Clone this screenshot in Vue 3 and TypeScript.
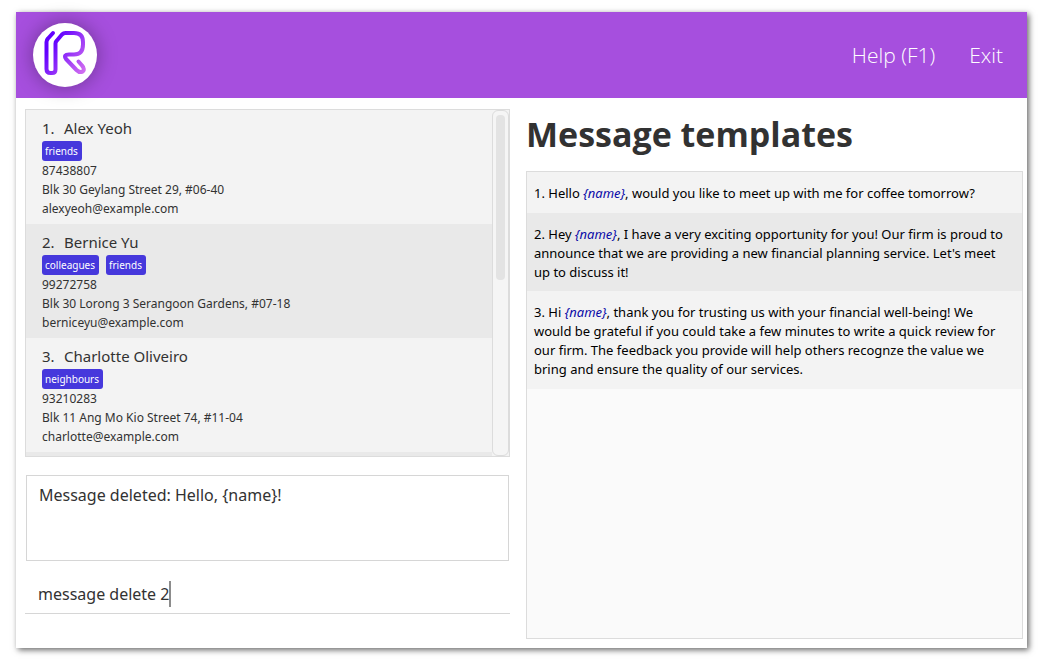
<script setup lang="ts">
import { ref } from 'vue'

interface Person {
  name: string
  tags: string[]
  phone: string
  address: string
  email: string
}

interface Template {
  before: string
  after: string
}

const people: Person[] = [
  { name: 'Alex Yeoh', tags: ['friends'], phone: '87438807', address: 'Blk 30 Geylang Street 29, #06-40', email: 'alexyeoh@example.com' },
  { name: 'Bernice Yu', tags: ['colleagues', 'friends'], phone: '99272758', address: 'Blk 30 Lorong 3 Serangoon Gardens, #07-18', email: 'berniceyu@example.com' },
  { name: 'Charlotte Oliveiro', tags: ['neighbours'], phone: '93210283', address: 'Blk 11 Ang Mo Kio Street 74, #11-04', email: 'charlotte@example.com' },
]

const templates: Template[] = [
  { before: 'Hello ', after: ', would you like to meet up with me for coffee tomorrow?' },
  { before: 'Hey ', after: ", I have a very exciting opportunity for you! Our firm is proud to announce that we are providing a new financial planning service. Let's meet up to discuss it!" },
  { before: 'Hi ', after: ', thank you for trusting us with your financial well-being! We would be grateful if you could take a few minutes to write a quick review for our firm. The feedback you provide will help others recognze the value we bring and ensure the quality of our services.' },
]

const placeholder = '{name}'
const result = 'Message deleted: Hello, {name}!'
const command = ref('message delete 2')
</script>

<template>
  <div class="desktop">
    <div class="window">
      <header class="bar">
        <div class="logo">
          <svg viewBox="0 0 64 64" aria-hidden="true">
            <defs>
              <linearGradient id="ink" gradientUnits="userSpaceOnUse" x1="14" y1="20" x2="52" y2="46">
                <stop offset="0.1" stop-color="#6200ff" />
                <stop offset="1" stop-color="#cf6cf0" />
              </linearGradient>
            </defs>
            <path
              d="M20 10 L15 15.500 Q13.500 17 13.500 19 V46 Q13.500 50 17.500 50 H19 Q22.500 50 22.500 46.500 V20.500 Q22.500 19 23.500 18 L29 11.500 Q30.500 10 32.500 10 H41 Q50 10 50 19 V21.500 Q50 31.500 41 31.500 H36 Q30 31.500 33 36 L43.500 47 Q46 49.500 48.500 49 C52 48 51 44.500 49 42.500 L45.500 38.500"
              fill="none" stroke="url(#ink)" stroke-width="4" stroke-linecap="round" stroke-linejoin="round"
            />
          </svg>
        </div>
        <nav class="menu">
          <button type="button">Help (F1)</button>
          <button type="button">Exit</button>
        </nav>
      </header>

      <main class="content">
        <section class="left">
          <div class="people">
            <ol class="cards">
              <li v-for="(person, i) in people" :key="person.email" class="card">
                <h2><span class="index">{{ i + 1 }}.</span>{{ person.name }}</h2>
                <div class="tags">
                  <span v-for="tag in person.tags" :key="tag" class="tag">{{ tag }}</span>
                </div>
                <p>{{ person.phone }}</p>
                <p>{{ person.address }}</p>
                <p>{{ person.email }}</p>
              </li>
              <li class="card"></li>
            </ol>
            <div class="track"><div class="thumb"></div></div>
          </div>
          <div class="result" role="status">{{ result }}</div>
          <label class="command">
            <input v-model="command" type="text" aria-label="Command" spellcheck="false" />
            <span class="caret"></span>
          </label>
        </section>

        <section class="right">
          <h1>Message templates</h1>
          <ol class="templates">
            <li v-for="(item, i) in templates" :key="i">
              {{ i + 1 }}. {{ item.before }}<em>{{ placeholder }}</em>{{ item.after }}
            </li>
          </ol>
        </section>
      </main>
    </div>
  </div>
</template>

<style>
body {
  background: #fff;
}
</style>

<style scoped>
* {
  box-sizing: border-box;
  margin: 0;
  padding: 0;
}

.desktop {
  display: flex;
  height: 100vh;
  padding: 12px 24px 24px 16px;
  font-family: "Noto Sans", "Open Sans", sans-serif;
  color: #323232;
}

.window {
  flex: 1;
  display: flex;
  flex-direction: column;
  min-width: 0;
  background: #fff;
  box-shadow: 2px 2px 6px rgba(0, 0, 0, 0.6);
}

.bar {
  display: flex;
  align-items: center;
  justify-content: space-between;
  padding: 11px 24px 11px 17px;
  background: #a64fde;
}

.logo {
  width: 64px;
  height: 64px;
  border-radius: 50%;
  background: #fff;
  box-shadow: 0 0 20px rgba(0, 0, 0, 0.35);
}

.logo svg {
  display: block;
}

.menu {
  display: flex;
  gap: 34px;
}

.menu button {
  border: 0;
  background: none;
  color: #fff;
  font: 300 21px/28px "Open Sans", "Noto Sans", sans-serif;
}

.content {
  flex: 1;
  display: grid;
  grid-template-columns: 485fr 497fr;
  gap: 16px;
  min-height: 0;
  padding: 11px 4px 9px 9px;
}

.left,
.right {
  display: flex;
  flex-direction: column;
  min-width: 0;
  min-height: 0;
}

.people {
  flex: 1;
  display: flex;
  min-height: 0;
  border: 1px solid #dcdcdc;
  background: #f3f3f3;
}

.cards {
  flex: 1;
  overflow: hidden;
  list-style: none;
}

.card {
  min-height: 114px;
  padding: 7px 16px 6px;
  background: #f3f3f3;
}

.card:nth-child(even) {
  background: #e9e9e9;
}

.card h2 {
  font-size: 15px;
  font-weight: 400;
  line-height: 22px;
}

.index {
  display: inline-block;
  width: 22px;
}

.tags {
  display: flex;
  gap: 7px;
  padding: 2px 0 0;
}

.tag {
  padding: 0 4px 0 3px;
  border-radius: 3px;
  background: #4638dc;
  color: #fff;
  font-size: 10px;
  line-height: 20px;
}

.card p {
  font-size: 12px;
  line-height: 19px;
}

.track {
  width: 17px;
  padding: 4px 3px;
  border: 1px solid #dcdcdc;
  border-radius: 6px;
  background: #f5f5f5;
}

.thumb {
  height: 49%;
  border-radius: 4px;
  background: #e3e3e3;
}

.result {
  height: 86px;
  margin: 18px 1px 14px;
  padding: 7px 12px;
  border: 1px solid #d6d6d6;
  font-size: 16px;
  line-height: 24px;
}

.command {
  display: flex;
  align-items: center;
  height: 39px;
  margin-bottom: 25px;
  padding-left: 13px;
  border-bottom: 1px solid #d6d6d6;
}

.command input {
  field-sizing: content;
  border: 0;
  outline: 0;
  background: none;
  color: inherit;
  font: 16px/24px "Noto Sans", "Open Sans", sans-serif;
}

.caret {
  width: 2px;
  height: 26px;
  background: #8c8c8c;
}

.right h1 {
  padding: 1px 0 13px;
  font-family: "Open Sans", "Noto Sans", sans-serif;
  font-size: 34px;
  font-weight: 700;
  line-height: 48px;
}

.templates {
  flex: 1;
  border: 1px solid #dcdcdc;
  background: #fafafa;
  color: #000;
  font-size: 13px;
  line-height: 19px;
  list-style: none;
}

.templates li {
  padding: 12px 16px 10px 7px;
  background: #f3f3f3;
}

.templates li:nth-child(even) {
  padding-bottom: 9px;
  background: #e9e9e9;
}

.templates em {
  color: #0a0aa8;
}
</style>
